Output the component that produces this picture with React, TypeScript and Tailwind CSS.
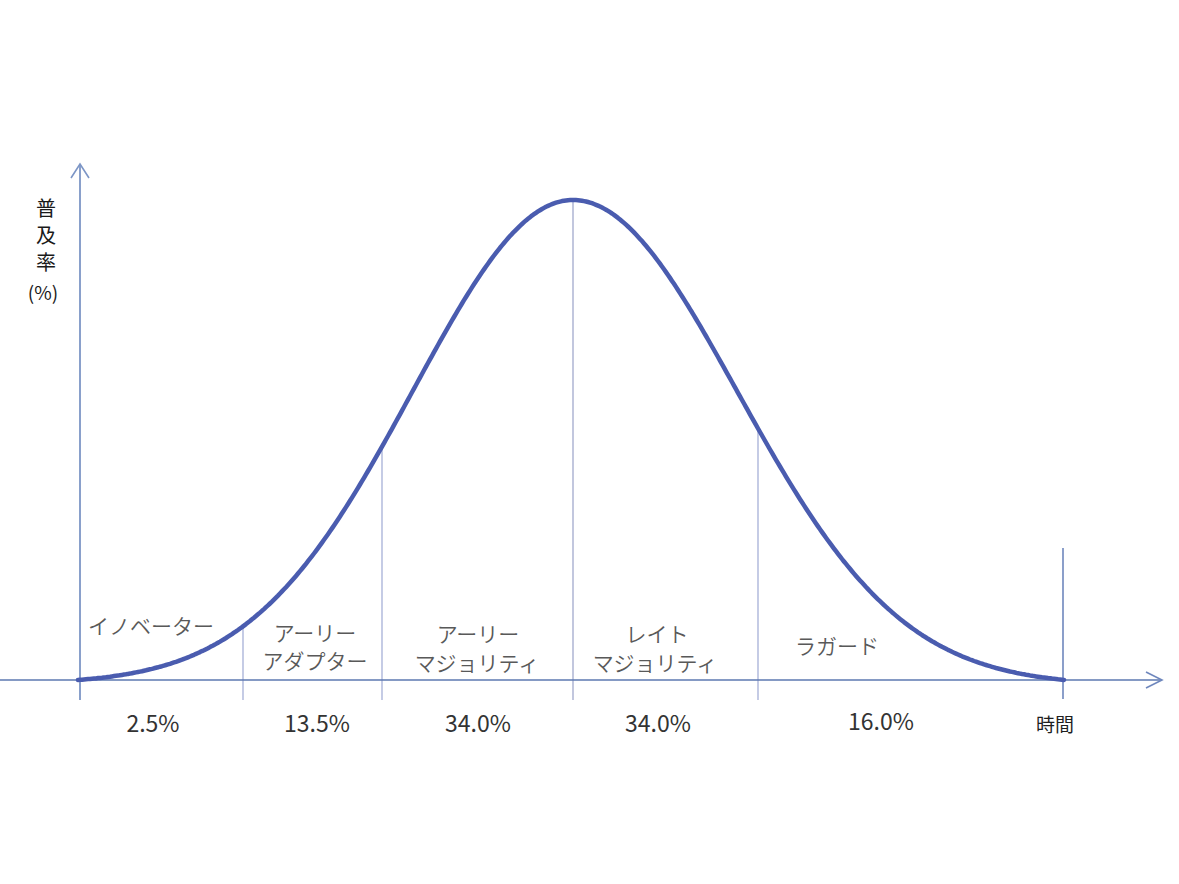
import React from "react";

const MU = 573;
const BASE = 680;
const PEAK = 200;
const X0 = 78;
const X1 = 1065;

function curveY(x: number): number {
  const s = x < MU ? 160 : 164;
  const end = x < MU ? X0 : X1;
  const gEnd = Math.exp(-((end - MU) ** 2) / (2 * s * s));
  const g = Math.exp(-((x - MU) ** 2) / (2 * s * s));
  const v = Math.max(0, (g - gEnd) / (1 - gEnd));
  return BASE - (BASE - PEAK) * v;
}

function curvePath(): string {
  const parts: string[] = [];
  for (let x = X0; x <= X1; x += 2) {
    parts.push(`${x.toFixed(1)},${curveY(x).toFixed(1)}`);
  }
  return "M " + parts.join(" L ");
}

const font = '"Noto Sans CJK JP", "Noto Sans", sans-serif';

export default function App() {
  const curve = curvePath();
  const dividers = [
    { x: 243, c: "#b7bfdf" },
    { x: 382, c: "#b7bfdf" },
    { x: 573, c: "#b3b9d6" },
    { x: 758, c: "#b7bfdf" },
  ];
  return (
    <div className="w-[1179px] h-[884px] bg-white overflow-hidden">
      <svg width="1179" height="884" viewBox="0 0 1179 884" className="block">
        {/* boundary lines */}
        {dividers.map((d) => (
          <line key={d.x} x1={d.x} y1={curveY(d.x)} x2={d.x} y2="700" stroke={d.c} strokeWidth="1.6" />
        ))}
        <line x1="1063" y1="548" x2="1063" y2="699" stroke="#6f87bd" strokeWidth="1.6" />

        {/* y axis */}
        <line x1="80" y1="164" x2="80" y2="700" stroke="#7d96c6" strokeWidth="1.8" />
        <polyline points="71,178 80,164 89,178" fill="none" stroke="#7d96c6" strokeWidth="1.6" />

        {/* x axis */}
        <line x1="0" y1="680" x2="1161" y2="680" stroke="#5c79b1" strokeWidth="1.6" />
        <polyline points="1146,672 1162,680 1146,688" fill="none" stroke="#6f87bd" strokeWidth="1.6" />

        {/* curve */}
        <path d={curve} fill="none" stroke="#4a5caf" strokeWidth="4.5" strokeLinecap="round" strokeLinejoin="round" />

        {/* y label */}
        <g fontFamily={font} fill="#1a1a1a" fontSize="20" textAnchor="middle" dominantBaseline="central">
          <text x="46" y="207">普</text>
          <text x="46" y="234">及</text>
          <text x="46" y="261">率</text>
          <text x="43" y="291" fontSize="19">(%)</text>
        </g>

        {/* segment labels */}
        <g fontFamily={font} fill="#595959" fontSize="21" fontWeight="350" dominantBaseline="central">
          <text x="88" y="625">イノベーター</text>
          <text x="315" y="632" textAnchor="middle">アーリー</text>
          <text x="315" y="660" textAnchor="middle">アダプター</text>
          <text x="478" y="633" textAnchor="middle">アーリー</text>
          <text x="477" y="662" textAnchor="middle">マジョリティ</text>
          <text x="657" y="633" textAnchor="middle">レイト</text>
          <text x="655" y="662" textAnchor="middle">マジョリティ</text>
          <text x="795" y="645">ラガード</text>
        </g>

        {/* percentages */}
        <g fontFamily={font} fill="#333333" fontSize="23" textAnchor="middle" dominantBaseline="central">
          <text x="153" y="722">2.5%</text>
          <text x="317" y="722">13.5%</text>
          <text x="478" y="722">34.0%</text>
          <text x="658" y="722">34.0%</text>
          <text x="881" y="720">16.0%</text>
          <text x="1055" y="723" fontSize="19" fill="#1f1f1f">時間</text>
        </g>
      </svg>
    </div>
  );
}
